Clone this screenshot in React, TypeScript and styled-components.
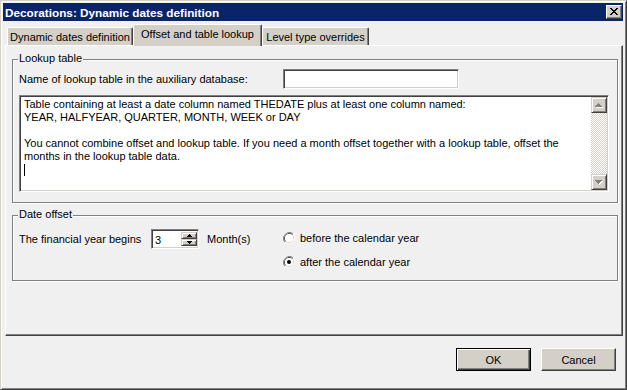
import React from "react";
import styled, { createGlobalStyle } from "styled-components";

const GlobalStyle = createGlobalStyle`
  html, body { margin: 0; padding: 0; background: #f0f0f0; }
  body { font-family: "Liberation Sans", Arial, sans-serif; font-size: 11px; color: #000; }
  * { box-sizing: border-box; }
`;

const Window = styled.div`
  width: 627px;
  height: 390px;
  background: #f0f0f0;
  border: 1px solid;
  border-color: #d4d0c8 #404040 #404040 #d4d0c8;
  box-shadow: inset 1px 1px #fff, inset -1px -1px #808080;
  padding: 2px 3px 2px 2px;
  display: flex;
  flex-direction: column;
`;

const TitleBar = styled.div`
  height: 18px;
  background: #0a246a;
  color: #fff;
  font-weight: bold;
  font-size: 11.75px;
  display: flex;
  align-items: center;
  justify-content: space-between;
  padding-left: 2px;
`;

const CloseButton = styled.div`
  width: 16px;
  height: 14px;
  margin-right: 1px;
  background: #d4d0c8;
  border: 1px solid;
  border-color: #fff #404040 #404040 #fff;
  box-shadow: inset -1px -1px #808080;
  display: flex;
  align-items: center;
  justify-content: center;
  padding: 0 1px 1px 0;
`;

const Body = styled.div`
  flex: 1;
  display: flex;
  flex-direction: column;
  padding-top: 3px;
  padding-left: 2px;
`;

const TabRow = styled.div`
  height: 21px;
  display: flex;
  align-items: flex-end;
  padding-left: 2px;
  position: relative;
  z-index: 1;
`;

const Tab = styled.div<{ $w: number; $active?: boolean }>`
  width: ${(p) => p.$w}px;
  height: ${(p) => (p.$active ? 22 : 18)}px;
  margin-bottom: ${(p) => (p.$active ? -1 : 0)}px;
  background: #d4d0c8;
  border-top: 1px solid #fff;
  border-left: 1px solid #fff;
  border-right: 1px solid #404040;
  border-radius: 2px 2px 0 0;
  box-shadow: inset -1px 0 #808080;
  display: flex;
  justify-content: center;
  padding-top: ${(p) => (p.$active ? 3 : 3)}px;
  line-height: 13px;
  white-space: nowrap;
`;

const Panel = styled.div`
  height: 291px;
  border-top: 1px solid #fff;
  border-left: 1px solid #fff;
  border-right: 1px solid #404040;
  border-bottom: 1px solid #404040;
  box-shadow: inset -1px -1px #808080;
  padding: 13px 4px 0 6px;
  display: flex;
  flex-direction: column;
  gap: 12px;
`;

const GroupBox = styled.div<{ $h: number }>`
  position: relative;
  height: ${(p) => p.$h}px;
  border: 1px solid #808080;
  box-shadow: inset 1px 1px #fff, 1px 1px #fff;
`;

const Legend = styled.span`
  position: absolute;
  top: -8px;
  left: 5px;
  padding: 0 1px;
  background: #f0f0f0;
  line-height: 13px;
`;

const LookupContent = styled.div`
  padding: 9px 8px 0 6px;
  display: flex;
  flex-direction: column;
  gap: 6px;
`;

const FieldRow = styled.div`
  display: flex;
  align-items: center;
  height: 20px;
`;

const FieldLabel = styled.span<{ $w: number }>`
  width: ${(p) => p.$w}px;
  flex: none;
  white-space: nowrap;
`;

const Sunken = styled.div`
  background: #fff;
  border: 1px solid;
  border-color: #808080 #fff #fff #808080;
  box-shadow: inset 1px 1px #404040, inset -1px -1px #d4d0c8;
`;

const TextInput = styled(Sunken)`
  width: 176px;
  height: 20px;
`;

const TextArea = styled(Sunken)`
  height: 97px;
  display: flex;
  padding: 1px;
`;

const TextContent = styled.div`
  flex: 1;
  padding: 1px 3px;
  line-height: 13px;
  white-space: pre;
`;

const Caret = styled.span`
  display: inline-block;
  width: 1px;
  height: 12px;
  background: #000;
  vertical-align: top;
  margin-top: 1px;
`;

const ScrollBar = styled.div`
  width: 16px;
  display: flex;
  flex-direction: column;
  background-color: #fff;
  background-image: conic-gradient(#d4d0c8 25%, #fff 0 50%, #d4d0c8 0 75%, #fff 0);
  background-size: 2px 2px;
  justify-content: space-between;
`;

const Raised = styled.div`
  background: #d4d0c8;
  border: 1px solid;
  border-color: #d4d0c8 #404040 #404040 #d4d0c8;
  box-shadow: inset 1px 1px #fff, inset -1px -1px #808080;
  display: flex;
  align-items: center;
  justify-content: center;
`;

const ScrollButton = styled(Raised)`
  width: 16px;
  height: 16px;
`;

const OffsetContent = styled.div`
  display: flex;
  align-items: flex-start;
  padding: 0 0 0 6px;
`;

const OffsetRow = styled.div`
  display: flex;
  align-items: center;
  height: 20px;
  margin-top: 13px;
`;

const Spinner = styled(Sunken)`
  width: 48px;
  height: 20px;
  display: flex;
  padding: 2px 1px 2px 2px;
`;

const SpinValue = styled.div`
  flex: 1;
  line-height: 16px;
  padding-left: 1px;
`;

const SpinButtons = styled.div`
  width: 16px;
  display: flex;
  flex-direction: column;
`;

const SpinButton = styled(Raised)`
  height: 8px;
`;

const MonthLabel = styled.span`
  margin-left: 8px;
  width: 76px;
`;

const RadioColumn = styled.div`
  display: flex;
  flex-direction: column;
  margin-top: 10px;
`;

const RadioRow = styled.label`
  display: flex;
  align-items: center;
  gap: 5px;
  height: 24px;
`;

const Footer = styled.div`
  flex: 1;
  display: flex;
  justify-content: flex-end;
  align-items: flex-start;
  gap: 10px;
  padding: 12px 7px 0 0;
`;

const Button = styled.div<{ $default?: boolean }>`
  width: 75px;
  height: 23px;
  background: #d4d0c8;
  display: flex;
  align-items: center;
  justify-content: center;
  border: 1px solid;
  border-color: ${(p) => (p.$default ? "#000" : "#fff #404040 #404040 #fff")};
  box-shadow: ${(p) =>
    p.$default
      ? "inset 1px 1px #fff, inset -1px -1px #404040, inset -2px -2px #808080"
      : "inset -1px -1px #808080"};
`;

const CloseIcon = () => (
  <svg width="8" height="7" viewBox="0 0 8 7" shapeRendering="crispEdges">
    <path
      fill="#000"
      d="M0 0h2v1H0z M6 0h2v1H6z M1 1h2v1H1z M5 1h2v1H5z M2 2h4v1H2z M3 3h2v1H3z M2 4h4v1H2z M1 5h2v1H1z M5 5h2v1H5z M0 6h2v1H0z M6 6h2v1H6z"
    />
  </svg>
);

const upTri = "M3 0h1v1H3z M2 1h3v1H2z M1 2h5v1H1z M0 3h7v1H0z";
const downTri = "M0 0h7v1H0z M1 1h5v1H1z M2 2h3v1H2z M3 3h1v1H3z";

const DisabledArrow = ({ up }: { up?: boolean }) => (
  <svg width="8" height="5" viewBox="0 0 8 5" shapeRendering="crispEdges">
    <path fill="#fff" transform="translate(1 1)" d={up ? upTri : downTri} />
    <path fill="#808080" d={up ? upTri : downTri} />
  </svg>
);

const SpinArrow = ({ up }: { up?: boolean }) => (
  <svg width="5" height="3" viewBox="0 0 5 3" shapeRendering="crispEdges">
    <path
      fill="#000"
      d={up ? "M2 0h1v1H2z M1 1h3v1H1z M0 2h5v1H0z" : "M0 0h5v1H0z M1 1h3v1H1z M2 2h1v1H2z"}
    />
  </svg>
);

const Radio = ({ checked }: { checked?: boolean }) => (
  <svg width="12" height="12" viewBox="0 0 12 12">
    <path d="M10.2 1.8 A6 6 0 0 0 1.8 10.2" fill="none" stroke="#808080" strokeWidth="1" />
    <path d="M1.8 10.2 A6 6 0 0 0 10.2 1.8" fill="none" stroke="#fff" strokeWidth="1" />
    <path d="M9.5 2.5 A5 5 0 0 0 2.5 9.5" fill="none" stroke="#404040" strokeWidth="1" />
    <path d="M2.5 9.5 A5 5 0 0 0 9.5 2.5" fill="none" stroke="#d4d0c8" strokeWidth="1" />
    <circle cx="6" cy="6" r="4" fill="#fff" />
    {checked && <circle cx="6" cy="6" r="2" fill="#000" />}
  </svg>
);

export default function App() {
  return (
    <>
      <GlobalStyle />
      <Window>
        <TitleBar>
          <span>Decorations: Dynamic dates definition</span>
          <CloseButton>
            <CloseIcon />
          </CloseButton>
        </TitleBar>
        <Body>
          <TabRow>
            <Tab $w={126}>Dynamic dates definition</Tab>
            <Tab $w={129} $active>
              Offset and table lookup
            </Tab>
            <Tab $w={107}>Level type overrides</Tab>
          </TabRow>
          <Panel>
            <GroupBox $h={144}>
              <Legend>Lookup table</Legend>
              <LookupContent>
                <FieldRow>
                  <FieldLabel $w={264}>Name of lookup table in the auxiliary database:</FieldLabel>
                  <TextInput />
                </FieldRow>
                <TextArea>
                  <TextContent>
                    {"Table containing at least a date column named THEDATE plus at least one column named:\nYEAR, HALFYEAR, QUARTER, MONTH, WEEK or DAY\n\nYou cannot combine offset and lookup table. If you need a month offset together with a lookup table, offset the\nmonths in the lookup table data.\n"}
                    <Caret />
                  </TextContent>
                  <ScrollBar>
                    <ScrollButton>
                      <DisabledArrow up />
                    </ScrollButton>
                    <ScrollButton>
                      <DisabledArrow />
                    </ScrollButton>
                  </ScrollBar>
                </TextArea>
              </LookupContent>
            </GroupBox>
            <GroupBox $h={66}>
              <Legend>Date offset</Legend>
              <OffsetContent>
                <OffsetRow>
                  <FieldLabel $w={132}>The financial year begins</FieldLabel>
                  <Spinner>
                    <SpinValue>3</SpinValue>
                    <SpinButtons>
                      <SpinButton>
                        <SpinArrow up />
                      </SpinButton>
                      <SpinButton>
                        <SpinArrow />
                      </SpinButton>
                    </SpinButtons>
                  </Spinner>
                  <MonthLabel>Month(s)</MonthLabel>
                </OffsetRow>
                <RadioColumn>
                  <RadioRow>
                    <Radio />
                    before the calendar year
                  </RadioRow>
                  <RadioRow>
                    <Radio checked />
                    after the calendar year
                  </RadioRow>
                </RadioColumn>
              </OffsetContent>
            </GroupBox>
          </Panel>
          <Footer>
            <Button $default>OK</Button>
            <Button>Cancel</Button>
          </Footer>
        </Body>
      </Window>
    </>
  );
}
